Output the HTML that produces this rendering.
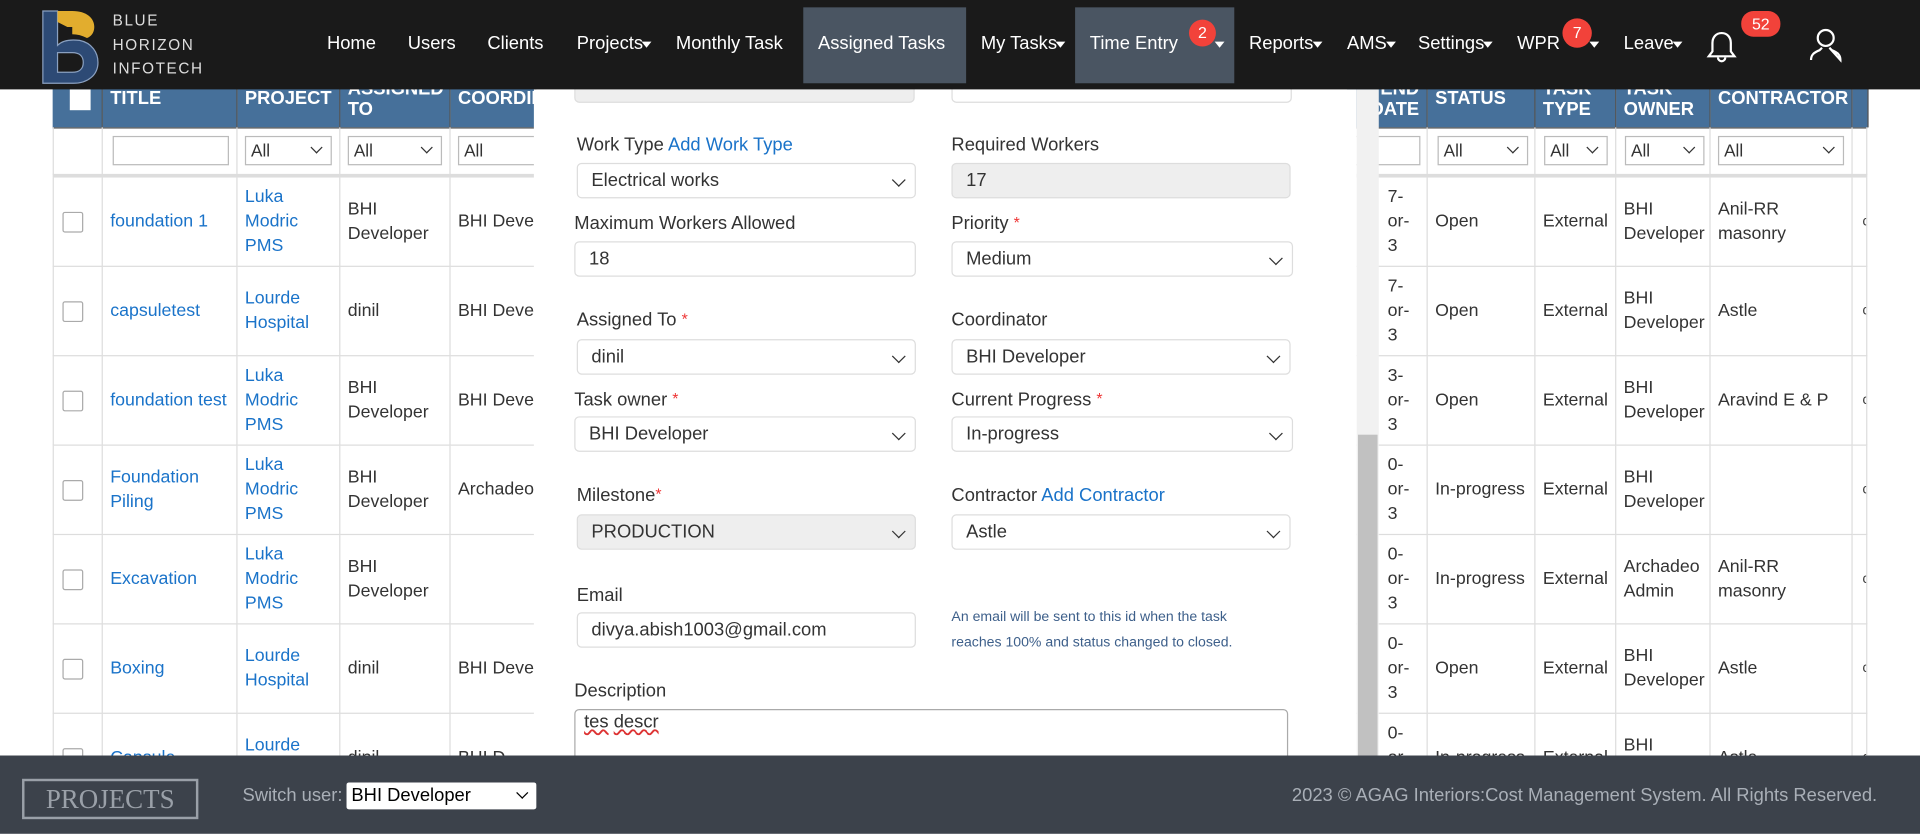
<!DOCTYPE html>
<html><head><meta charset="utf-8"><style>
html,body{margin:0;padding:0;width:1920px;height:834px;overflow:hidden;background:#fff;}
#w{position:absolute;left:0;top:0;width:1568px;height:681px;transform:scale(1.22449);transform-origin:0 0;font-family:"Liberation Sans",Arial,sans-serif;font-size:15px;color:#333;overflow:hidden;background:#fff;}
.a{position:absolute;}
.nav{left:0;top:0;width:1568px;height:73px;background:#1a1a1a;z-index:5;}
.ni{position:absolute;top:27px;color:#fff;font-size:15px;white-space:nowrap;}
.car{display:inline-block;width:0;height:0;border-left:4px solid transparent;border-right:4px solid transparent;border-top:5px solid #fff;vertical-align:middle;margin-left:-1px;}
.badge{position:absolute;background:#f2423a;color:#fff;font-size:13px;text-align:center;border-radius:10px;height:20px;line-height:20px;}
.th{position:absolute;top:60px;height:44px;background:#46709a;color:#fff;font-weight:bold;font-size:15px;border-right:1px solid #555;box-sizing:border-box;padding:4px 6px;line-height:17px;overflow:hidden;white-space:nowrap;}
.fl{position:absolute;top:104px;height:39px;border-right:1px solid #ddd;box-sizing:border-box;}
.sel{position:absolute;top:7px;height:24px;border:1px solid #bbb;box-sizing:border-box;font-size:14px;line-height:22px;padding-left:4px;background:#fff;}
.sel i,.fs i{position:absolute;right:8px;top:5px;width:6px;height:6px;border-right:1.6px solid #333;border-bottom:1.6px solid #333;transform:rotate(45deg);}
.td{position:absolute;height:73px;border-right:1px solid #ddd;border-bottom:1px solid #ddd;box-sizing:border-box;padding:0 6px;display:flex;align-items:center;line-height:20px;font-size:14.5px;overflow:hidden;}
.nw{white-space:nowrap;}
.lnk{color:#1a73c9;}
.cb{width:17px;height:17px;border:1px solid #aaa;border-radius:2px;box-sizing:border-box;margin-left:7px;}
.modal{left:436px;top:73px;width:672px;height:544px;background:#fff;z-index:3;}
.lb{position:absolute;font-size:15px;color:#333;white-space:nowrap;}
.lb b{color:#e33;font-weight:normal;font-size:13px;vertical-align:top;}
.fs{position:absolute;height:29px;border:1px solid #ddd;border-radius:4px;box-sizing:border-box;padding-left:11px;line-height:27px;font-size:15px;color:#333;background:#fff;}
.fs i{top:9px;right:9px;width:7px;height:7px;}
.gray{background:#eee;}
.foot{left:0;top:617px;width:1568px;height:64px;background:#3c424b;z-index:6;}
</style></head><body><div id="w">

<div class="a nav">
  <svg class="a" style="left:33px;top:6px" width="50" height="64" viewBox="0 0 50 64">
    <path d="M2 3h12v28c4-4 10-5 18-4 10 2 15 10 15 18 0 10-8 17-20 17H2z" fill="#2d4a75" stroke="#8aa0c0" stroke-width="1"/>
    <path d="M14 3h12c12 0 18 6 18 13 0 5-3 8-6 9-4-2-8-3-12-3v-6h-4l-8-4z" fill="#e2ad2e"/>
    <path d="M14 37h12c6 0 9 3 9 8s-3 8-9 8H14z" fill="#1a1a1a" stroke="#8aa0c0" stroke-width="1"/>
  </svg>
  <div class="a" style="left:92px;top:8px;color:#ddd;font-size:12.5px;letter-spacing:1.3px;line-height:19.5px">BLUE<br>HORIZON<br>INFOTECH</div>
  <div class="ni" style="left:267px">Home</div>
  <div class="ni" style="left:333px">Users</div>
  <div class="ni" style="left:398px">Clients</div>
  <div class="ni" style="left:471px">Projects<span class="car"></span></div>
  <div class="ni" style="left:552px">Monthly Task</div>
  <div class="a" style="left:656px;top:6px;width:133px;height:62px;background:#4a5562"></div>
  <div class="ni" style="left:668px">Assigned Tasks</div>
  <div class="ni" style="left:801px">My Tasks<span class="car"></span></div>
  <div class="a" style="left:878px;top:6px;width:130px;height:62px;background:#4a5562"></div>
  <div class="ni" style="left:890px">Time Entry</div>
  <div class="badge" style="left:971px;top:16px;width:22px;border-radius:11px;height:22px;line-height:22px">2</div>
  <div class="ni" style="left:993px;top:27px"><span class="car"></span></div>
  <div class="ni" style="left:1020px">Reports<span class="car"></span></div>
  <div class="ni" style="left:1100px">AMS<span class="car"></span></div>
  <div class="ni" style="left:1158px">Settings<span class="car"></span></div>
  <div class="ni" style="left:1239px">WPR</div>
  <div class="badge" style="left:1276px;top:15px;width:24px;height:24px;line-height:24px;border-radius:12px">7</div>
  <div class="ni" style="left:1299px"><span class="car"></span></div>
  <div class="ni" style="left:1326px">Leave<span class="car"></span></div>
  <svg class="a" style="left:1393px;top:24px" width="26" height="30" viewBox="0 0 26 30"><path d="M13 3c-5 0-7.5 4-7.5 8v7l-3 4h21l-3-4v-7c0-4-2.5-8-7.5-8z" fill="none" stroke="#fff" stroke-width="1.8"/><path d="M10 23a3 3 0 0 0 6 0" fill="none" stroke="#fff" stroke-width="1.8"/></svg>
  <div class="badge" style="left:1422px;top:9px;width:32px;height:21px;line-height:21px">52</div>
  <svg class="a" style="left:1476px;top:21px" width="30" height="30" viewBox="0 0 30 30"><circle cx="15" cy="10" r="6.5" fill="none" stroke="#fff" stroke-width="1.8"/><path d="M3 28c0-4 2-6 7-8l2-2m6 0l2 2c5 2 7 4 7 8z" fill="none" stroke="#fff" stroke-width="1.8"/></svg>
</div>

<div class="th" style="left:43px;width:41px"><div style="width:17px;height:17px;background:#fff;margin:9px 0 0 8px"></div></div>
<div class="th" style="left:84px;width:110px;padding-top:12px">TITLE</div>
<div class="th" style="left:194px;width:84px;padding-top:12px">PROJECT</div>
<div class="th" style="left:278px;width:90px">ASSIGNED<br>TO</div>
<div class="th" style="left:368px;width:70px;padding-top:12px">COORDINATOR</div>
<div class="th" style="left:1100px;width:66px;text-align:right">END<br>DATE</div>
<div class="th" style="left:1166px;width:88px;padding-top:12px">STATUS</div>
<div class="th" style="left:1254px;width:66px">TASK<br>TYPE</div>
<div class="th" style="left:1320px;width:77px">TASK<br>OWNER</div>
<div class="th" style="left:1397px;width:116px;padding-top:12px">CONTRACTOR</div>
<div class="th" style="left:1513px;width:12px"></div>
<div class="a" style="left:43px;top:104px;width:1482px;height:1px;background:#555"></div>

<div class="fl" style="left:43px;width:41px;border-left:1px solid #ddd"></div>
<div class="fl" style="left:84px;width:110px"><div class="sel" style="left:8px;width:95px"></div></div>
<div class="fl" style="left:194px;width:84px"><div class="sel" style="left:6px;width:71px">All<i></i></div></div>
<div class="fl" style="left:278px;width:90px"><div class="sel" style="left:6px;width:77px">All<i></i></div></div>
<div class="fl" style="left:368px;width:70px"><div class="sel" style="left:6px;width:70px">All</div></div>
<div class="fl" style="left:1100px;width:66px"><div class="sel" style="left:0;width:60px"></div></div>
<div class="fl" style="left:1166px;width:88px"><div class="sel" style="left:8px;width:74px">All<i></i></div></div>
<div class="fl" style="left:1254px;width:66px"><div class="sel" style="left:7px;width:52px">All<i></i></div></div>
<div class="fl" style="left:1320px;width:77px"><div class="sel" style="left:7px;width:65px">All<i></i></div></div>
<div class="fl" style="left:1397px;width:116px"><div class="sel" style="left:6px;width:103px">All<i></i></div></div>
<div class="fl" style="left:1513px;width:12px"></div>
<div class="a" style="left:43px;top:142px;width:1482px;height:3px;background:#ddd"></div>

<div id="rows"></div>

<div class="a modal">
  <div class="fs gray" style="left:33px;top:-20px;width:278px;height:31px"></div>
  <div class="fs" style="left:341px;top:-20px;width:278px;height:31px"></div>
  <div class="lb" style="left:35px;top:37px">Work Type <span class="lnk">Add Work Type</span></div>
  <div class="fs" style="left:35px;top:60px;width:277px">Electrical works<i></i></div>
  <div class="lb" style="left:341px;top:37px">Required Workers</div>
  <div class="fs gray" style="left:341px;top:60px;width:277px">17</div>
  <div class="lb" style="left:33px;top:101px">Maximum Workers Allowed</div>
  <div class="fs" style="left:33px;top:124px;width:279px">18</div>
  <div class="lb" style="left:341px;top:101px">Priority <b>*</b></div>
  <div class="fs" style="left:341px;top:124px;width:279px">Medium<i></i></div>
  <div class="lb" style="left:35px;top:180px">Assigned To <b>*</b></div>
  <div class="fs" style="left:35px;top:204px;width:277px">dinil<i></i></div>
  <div class="lb" style="left:341px;top:180px">Coordinator</div>
  <div class="fs" style="left:341px;top:204px;width:277px">BHI Developer<i></i></div>
  <div class="lb" style="left:33px;top:245px">Task owner <b>*</b></div>
  <div class="fs" style="left:33px;top:267px;width:279px">BHI Developer<i></i></div>
  <div class="lb" style="left:341px;top:245px">Current Progress <b>*</b></div>
  <div class="fs" style="left:341px;top:267px;width:279px">In-progress<i></i></div>
  <div class="lb" style="left:35px;top:323px">Milestone<b>*</b></div>
  <div class="fs gray" style="left:35px;top:347px;width:277px">PRODUCTION<i></i></div>
  <div class="lb" style="left:341px;top:323px">Contractor <span class="lnk">Add Contractor</span></div>
  <div class="fs" style="left:341px;top:347px;width:277px">Astle<i></i></div>
  <div class="lb" style="left:35px;top:405px">Email</div>
  <div class="fs" style="left:35px;top:427px;width:277px">divya.abish1003@gmail.com</div>
  <div class="lb" style="left:341px;top:421px;font-size:11.5px;color:#3d5f8a;line-height:21px">An email will be sent to this id when the task<br>reaches 100% and status changed to closed.</div>
  <div class="lb" style="left:33px;top:483px">Description</div>
  <div class="a" style="left:33px;top:506px;width:583px;height:60px;border:1px solid #aaa;border-radius:4px;box-sizing:border-box;padding:1px 7px;font-size:15px;line-height:17px"><span style="text-decoration:underline wavy #d33">tes</span> <span style="text-decoration:underline wavy #d33">descr</span></div>
</div>
<div class="a" style="left:1108px;top:73px;width:18px;height:544px;background:#f1f1f1;z-index:4"></div>
<div class="a" style="left:1109px;top:355px;width:16px;height:262px;background:#c1c1c1;z-index:4"></div>

<div class="a foot">
  <div class="a" style="left:18px;top:19px;width:144px;height:33px;border:2px solid #9aa0a8;box-sizing:border-box;color:#9aa0a8;font-family:'Liberation Serif',serif;font-size:22px;text-align:center;line-height:30px">PROJECTS</div>
  <div class="a" style="left:198px;top:24px;color:#a9afb7;font-size:15px">Switch user:</div>
  <div class="a" style="left:283px;top:22px;width:155px;height:22px;background:#fff;border-radius:2px;font-size:15px;line-height:22px;padding-left:4px;box-sizing:border-box;color:#000">BHI Developer<span style="position:absolute;right:8px;top:5px;width:6px;height:6px;border-right:1.6px solid #000;border-bottom:1.6px solid #000;transform:rotate(45deg)"></span></div>
  <div class="a" style="right:35px;top:24px;color:#a9afb7;font-size:15px">2023 © AGAG Interiors:Cost Management System. All Rights Reserved.</div>
</div>

<script>
var R=[
["foundation 1","Luka<br>Modric<br>PMS","BHI<br>Developer","BHI Deve","7-<br>or-<br>3","Open","External","BHI<br>Developer","Anil-RR<br>masonry"],
["capsuletest","Lourde<br>Hospital","dinil","BHI Deve","7-<br>or-<br>3","Open","External","BHI<br>Developer","Astle"],
["foundation test","Luka<br>Modric<br>PMS","BHI<br>Developer","BHI Deve","3-<br>or-<br>3","Open","External","BHI<br>Developer","Aravind E &amp; P"],
["Foundation<br>Piling","Luka<br>Modric<br>PMS","BHI<br>Developer","Archadeo","0-<br>or-<br>3","In-progress","External","BHI<br>Developer",""],
["Excavation","Luka<br>Modric<br>PMS","BHI<br>Developer","","0-<br>or-<br>3","In-progress","External","Archadeo<br>Admin","Anil-RR<br>masonry"],
["Boxing","Lourde<br>Hospital","dinil","BHI Deve","0-<br>or-<br>3","Open","External","BHI<br>Developer","Astle"],
["Capsule","Lourde<br>Hospital","dinil","BHI D","0-<br>or-<br>3","In-progress","External","BHI<br>Developer","Astle"]];
var C=[[84,110,1],[194,84,1],[278,90,0],[368,70,0],[1100,66,0],[1166,88,0],[1254,66,0],[1320,77,0],[1397,116,0]];
var h='';
for(var i=0;i<R.length;i++){var t=145+i*73;
h+='<div class="td" style="left:43px;top:'+t+'px;width:41px;border-left:1px solid #ddd;padding:0"><div class="cb"></div></div>';
for(var j=0;j<9;j++){var c=C[j];var s=j==4?'justify-content:flex-end;padding-right:14px':'';
h+='<div class="td'+(c[2]?' lnk':'')+(j==3?' nw':'')+'" style="left:'+c[0]+'px;top:'+t+'px;width:'+c[1]+'px;'+s+'">'+R[i][j]+'</div>';}
h+='<div class="td" style="left:1513px;top:'+t+'px;width:12px;padding:0 0 0 8px;font-size:11px">c</div>';}
document.getElementById('rows').innerHTML=h;
</script>
</div></body></html>
